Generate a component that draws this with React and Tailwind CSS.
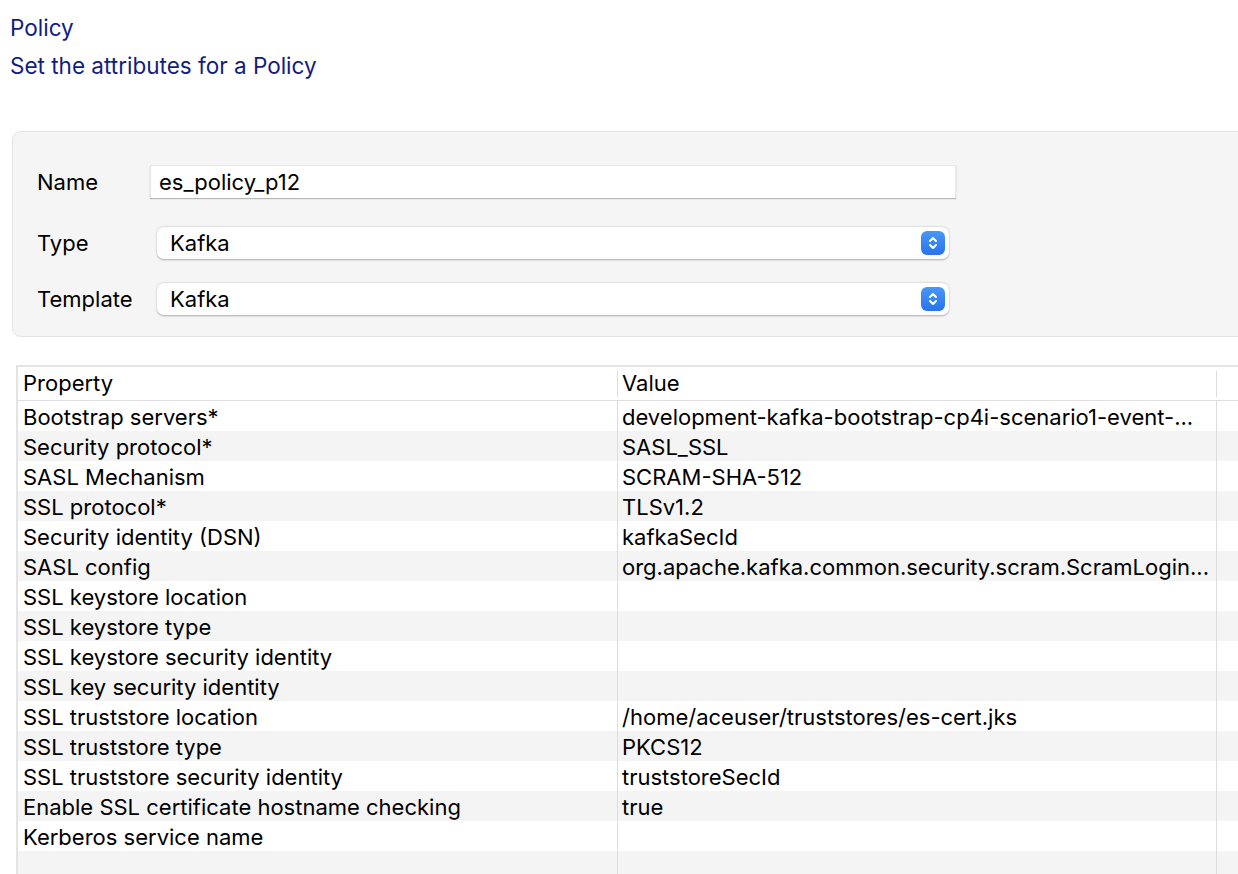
const rows = [
  ['Bootstrap servers*', 'development-kafka-bootstrap-cp4i-scenario1-event-...'],
  ['Security protocol*', 'SASL_SSL'],
  ['SASL Mechanism', 'SCRAM-SHA-512'],
  ['SSL protocol*', 'TLSv1.2'],
  ['Security identity (DSN)', 'kafkaSecId'],
  ['SASL config', 'org.apache.kafka.common.security.scram.ScramLogin...'],
  ['SSL keystore location', ''],
  ['SSL keystore type', ''],
  ['SSL keystore security identity', ''],
  ['SSL key security identity', ''],
  ['SSL truststore location', '/home/aceuser/truststores/es-cert.jks'],
  ['SSL truststore type', 'PKCS12'],
  ['SSL truststore security identity', 'truststoreSecId'],
  ['Enable SSL certificate hostname checking', 'true'],
  ['Kerberos service name', ''],
  ['', ''],
];

function Stepper() {
  return (
    <span className="w-6 h-6 rounded-[6px] bg-gradient-to-b from-[#4a97f8] to-[#2a73ec] flex items-center justify-center">
      <svg width="12" height="16" viewBox="0 0 12 16" fill="none" stroke="white" strokeWidth="2" strokeLinecap="round" strokeLinejoin="round">
        <path d="M3 6l3-3 3 3" />
        <path d="M3 10l3 3 3-3" />
      </svg>
    </span>
  );
}

function SelectBox({ value }) {
  return (
    <div className="w-[792px] h-8 bg-white rounded-[7px] shadow-[0_0.5px_2px_rgba(0,0,0,0.3)] flex items-center justify-between pl-[13px] pr-1">
      <span>{value}</span>
      <Stepper />
    </div>
  );
}

export default function App() {
  return (
    <div className="w-[1238px] h-[874px] overflow-hidden bg-white text-[22px] text-black font-['Inter',sans-serif]">
      <div className="pl-[10px] pt-[15px] text-[#111d80] leading-[26px] text-[22.5px]">
        <div>Policy</div>
        <div className="mt-3">Set the attributes for a Policy</div>
      </div>

      <div className="ml-3 mt-[52px] w-[1240px] h-[206px] bg-[#f5f5f5] border border-[#e3e3e3] rounded-[9px] pl-6 pt-[33px] leading-8">
        <div className="flex items-center h-[33px]">
          <span className="w-[113px]">Name</span>
          <div className="w-[806px] h-[33px] bg-white border-t border-l border-r border-[#e8e8e8] shadow-[0_1px_1px_rgba(0,0,0,0.25)] flex items-center pl-2">es_policy_p12</div>
        </div>
        <div className="flex items-center h-8 mt-[29px]">
          <span className="w-[120px]">Type</span>
          <SelectBox value="Kafka" />
        </div>
        <div className="flex items-center h-8 mt-6">
          <span className="w-[120px]">Template</span>
          <SelectBox value="Kafka" />
        </div>
      </div>

      <div className="ml-4 mt-7 w-[1240px] border-t-2 border-l-2 border-[#e4e4e4]">
        <div className="grid grid-cols-[599px_599px_1fr] h-[34px] border-b border-[#dedede] items-center">
          <div className="pl-[5px]">Property</div>
          <div className="pl-[4px] border-l border-[#dcdcdc] h-[26px] flex items-center">Value</div>
          <div className="border-l border-[#dcdcdc] h-[26px]"></div>
        </div>
        {rows.map(([k, v], i) => (
          <div key={i} className={`grid grid-cols-[599px_599px_1fr] h-[30px] items-stretch ${i % 2 === 1 ? 'bg-[#f4f4f4]' : 'bg-white'}`}>
            <div className="pl-[5px] flex items-center whitespace-nowrap">{k}</div>
            <div className="pl-[4px] border-l border-[#dcdcdc] flex items-center whitespace-nowrap overflow-hidden">{v}</div>
            <div className="border-l border-[#dcdcdc]"></div>
          </div>
        ))}
      </div>
    </div>
  );
}
